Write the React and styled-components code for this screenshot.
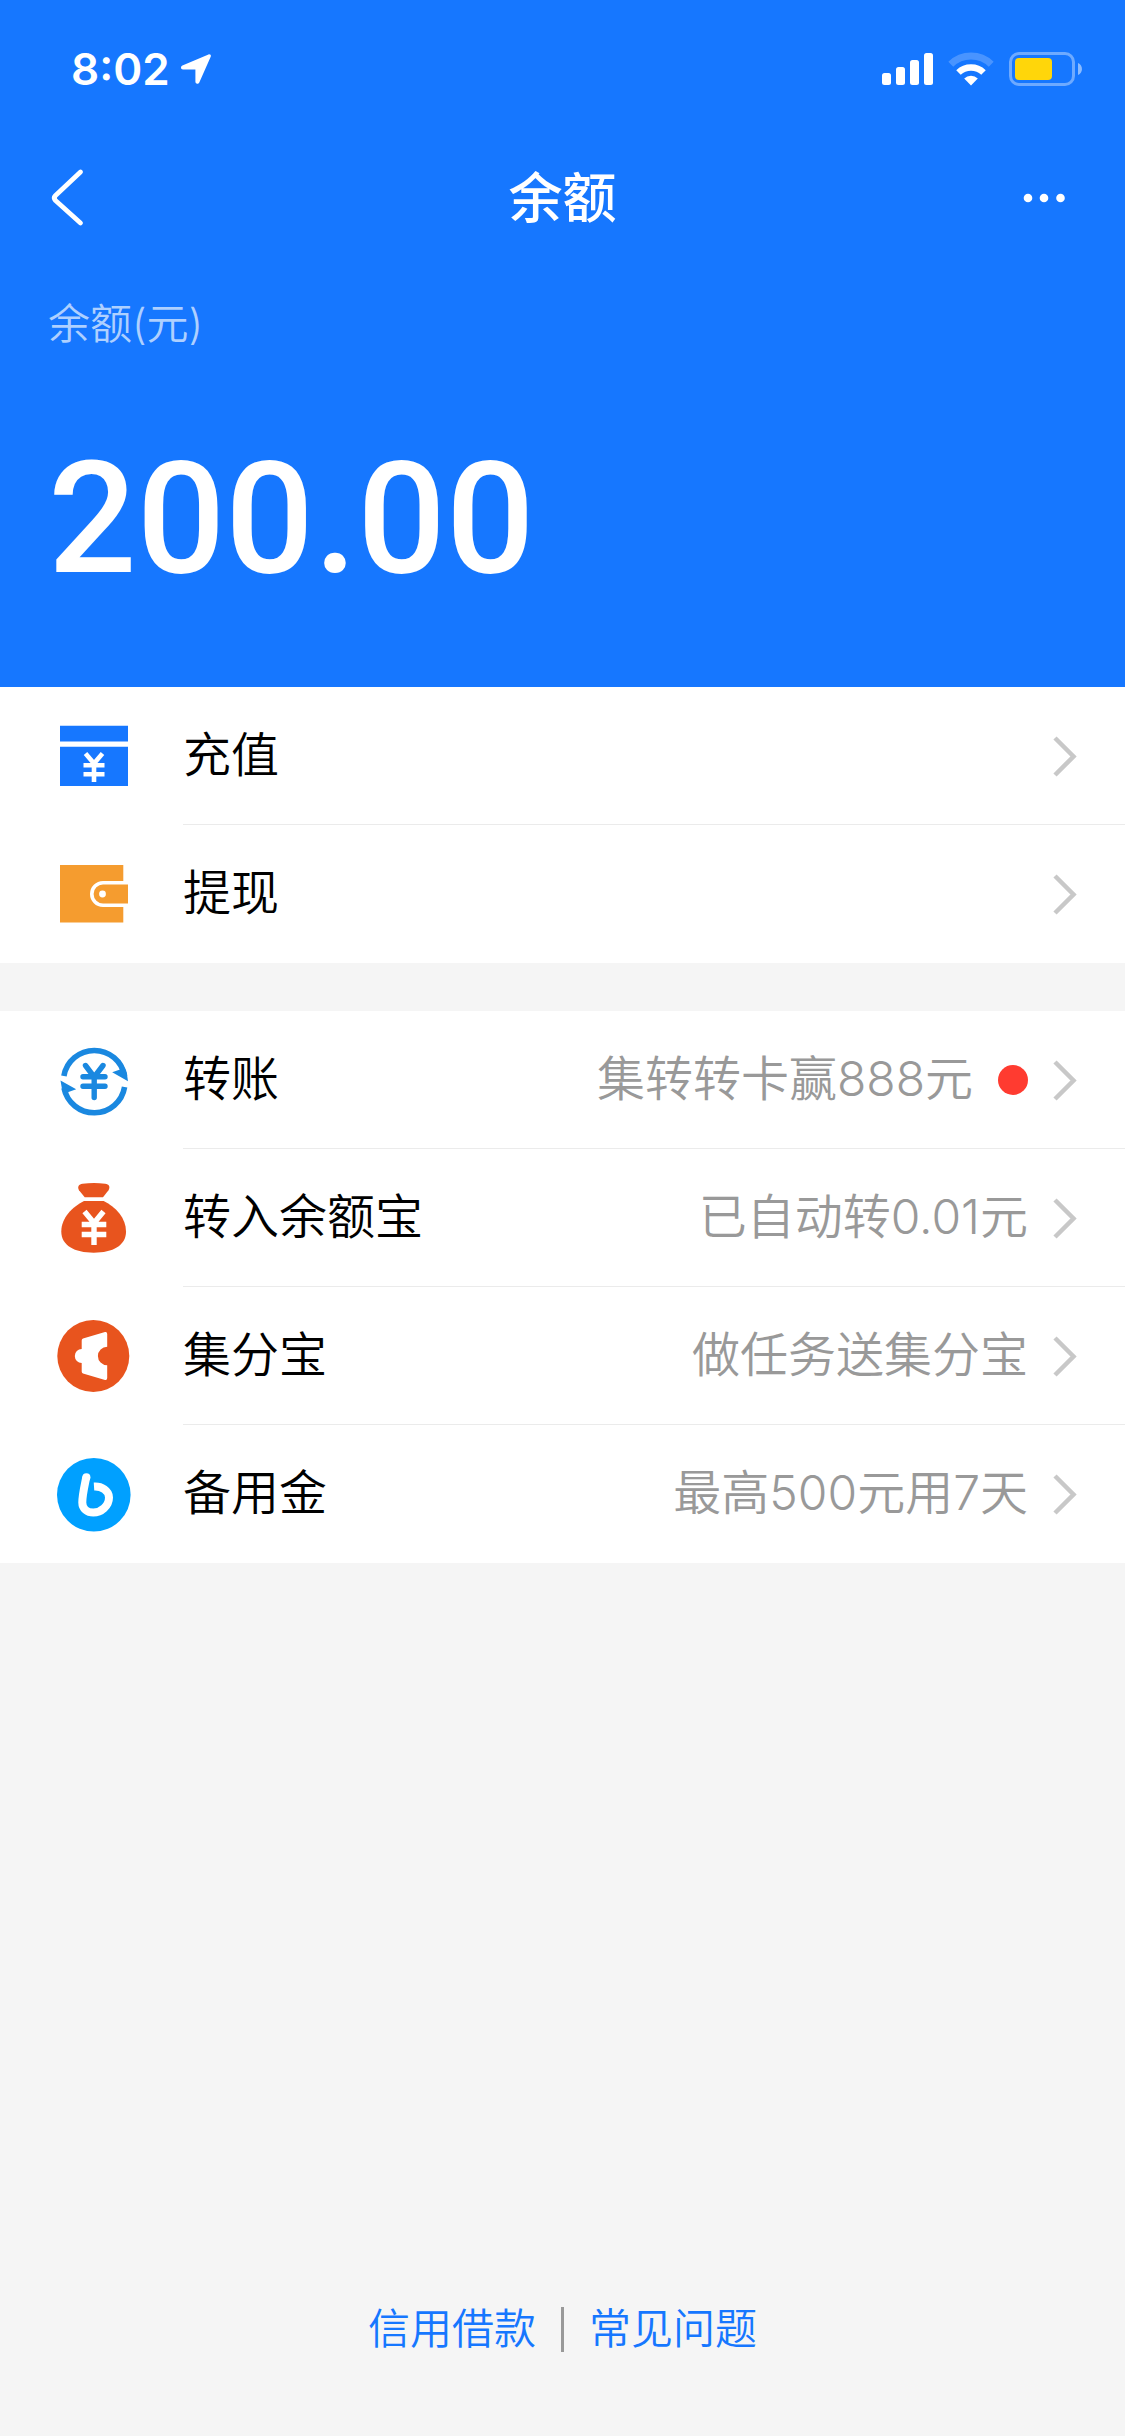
import React from 'react';
import styled, { createGlobalStyle } from 'styled-components';

const GlobalStyle = createGlobalStyle`
  * { box-sizing: border-box; }
  body {
    margin: 0;
    background: #f5f5f5;
    font-family: Inter, "Noto Sans CJK SC", sans-serif;
    font-weight: 350;
  }
  svg { display: block; flex: none; overflow: visible; }
`;

const Page = styled.div`
  display: flex;
  flex-direction: column;
  min-height: 100vh;
`;

const Header = styled.header`
  background: #1677ff;
  color: #fff;
  padding-bottom: 64px;
`;

const StatusBar = styled.div`
  display: flex;
  align-items: center;
  justify-content: space-between;
  height: 138px;
  padding: 0 43px 0 71px;
`;

const StatusGroup = styled.div`
  display: flex;
  align-items: center;
  gap: ${(p) => p.$gap}px;
`;

const Time = styled.span`
  font-size: 44px;
  line-height: 60px;
  font-weight: 600;
`;

const NavBar = styled.div`
  display: grid;
  grid-template-columns: 1fr auto 1fr;
  align-items: center;
  height: 120px;
  padding: 0 48px;
`;

const IconButton = styled.button`
  display: flex;
  align-items: center;
  justify-self: ${(p) => p.$side};
  height: 72px;
  padding: 0;
  border: 0;
  background: none;
  color: inherit;
`;

const Title = styled.h1`
  margin: 0;
  padding-top: 2px;
  font-size: 54px;
  line-height: 72px;
  font-weight: 500;
`;

const Balance = styled.section`
  padding: 36px 48px 0;
`;

const BalanceLabel = styled.p`
  margin: 0;
  font-size: 42px;
  line-height: 60px;
  color: rgba(255, 255, 255, 0.66);
`;

const Amount = styled.p`
  margin: 60px 0 0;
  font-family: Roboto, sans-serif;
  font-size: 156px;
  line-height: 209px;
  font-weight: 500;
`;

const List = styled.ul`
  margin: 0 0 48px;
  padding: 0;
  list-style: none;
  background: #fff;
`;

const Row = styled.a`
  display: flex;
  align-items: center;
  gap: 53px;
  height: 138px;
  padding-left: 58px;
  color: #000;
  text-decoration: none;
`;

const RowBody = styled.span`
  display: flex;
  flex: 1;
  align-items: center;
  gap: 25px;
  height: 100%;
  padding-right: 48px;
  border-bottom: 1px solid #ebebeb;

  li:last-child & { border-bottom-color: transparent; }
`;

const RowText = styled.span`
  font-size: 48px;
  line-height: 66px;
  padding-bottom: 2px;
`;

const RowLabel = styled(RowText)`
  flex: 1;
`;

const RowValue = styled(RowText)`
  color: #999;
`;

const Dot = styled.span`
  width: 30px;
  height: 30px;
  border-radius: 50%;
  background: #ff3b30;
`;

const Footer = styled.footer`
  display: flex;
  align-items: center;
  justify-content: center;
  gap: 25px;
  margin-top: auto;
  padding-bottom: 77px;
`;

const FooterLink = styled.a`
  font-size: 42px;
  line-height: 60px;
  color: #1677ff;
  text-decoration: none;
`;

const Separator = styled.span`
  width: 3px;
  height: 45px;
  background: #999;
`;

const LocationArrow = () => (
  <svg width="30" height="30" viewBox="0 0 30 30" fill="#fff">
    <path d="M27.5.4 1.4 11.6C-.7 12.6-.3 15.600 2 15.600h12.400v12.200c0 2.300 3 2.700 3.900.7L29.800 2.500C30.300 1 29 0 27.500.4z" />
  </svg>
);

const Signal = () => (
  <svg width="51" height="34" viewBox="0 0 51 34" fill="#fff">
    <rect x="0" y="21" width="9" height="12" rx="2.500" />
    <rect x="14" y="15" width="9" height="18" rx="2.500" />
    <rect x="28" y="8" width="9" height="25" rx="2.500" />
    <rect x="42" y="1" width="9" height="32" rx="2.500" />
  </svg>
);

const Wifi = () => (
  <svg width="46" height="34" viewBox="0 0 46 34" fill="none">
    <path d="M2.800 12.200A29 29 0 0 1 43.200 12.200" stroke="#fff" strokeOpacity=".22" strokeWidth="7" />
    <path d="M10.500 20.500A18 18 0 0 1 35.500 20.500" stroke="#fff" strokeWidth="6.500" />
    <path d="M23 33.500 16.200 26.600a9.600 9.600 0 0 1 13.600 0z" fill="#fff" />
  </svg>
);

const Battery = () => (
  <svg width="73" height="34" viewBox="0 0 73 34">
    <rect x="1.500" y="1.500" width="63" height="31" rx="8.500" fill="none" stroke="#fff" strokeOpacity=".38" strokeWidth="3" />
    <rect x="6" y="6" width="37" height="22" rx="4" fill="#ffd60a" />
    <path d="M69 11c5.300 2 5.300 10 0 12z" fill="#fff" fillOpacity=".5" />
  </svg>
);

const BackIcon = () => (
  <svg width="38" height="58" viewBox="0 0 38 58" fill="none" stroke="#fff" strokeWidth="4.800" strokeLinecap="round" strokeLinejoin="round">
    <path d="M32.500 3 7.500 26.500Q5.100 29 7.500 31.500L32.500 54" />
  </svg>
);

const MoreIcon = () => (
  <svg width="54" height="12" viewBox="0 0 54 12" fill="#fff">
    <circle cx="5" cy="6" r="4.300" />
    <circle cx="21" cy="6" r="4.300" />
    <circle cx="37.500" cy="6" r="4.300" />
  </svg>
);

const Chevron = () => (
  <svg width="24" height="40" viewBox="0 0 24 40" fill="none" stroke="#c8c8c8" strokeWidth="4.500">
    <path d="M2 2 20.500 20.500 2 39" />
  </svg>
);

const RechargeIcon = () => (
  <svg width="72" height="72" viewBox="0 0 72 72">
    <path d="M2 5.700h68v15.800H2zM2 26.700h68v39.300H2z" fill="#1677ff" />
    <path d="M27.500 33.500 36 43.500 44.500 33.500M25.500 45.300h21M25.500 54.200h21M36 43.500V62" fill="none" stroke="#fff" strokeWidth="4.600" />
  </svg>
);

const WalletIcon = () => (
  <svg width="72" height="72" viewBox="0 0 72 72">
    <path d="M2 7h63.300v16H45a13 13 0 0 0 0 26h20.300v15.500H2z" fill="#f59c2f" />
    <path d="M45 26.600h25v18.800H45a9.400 9.400 0 0 1 0-18.800z" fill="#f59c2f" />
    <circle cx="44.500" cy="36" r="3.400" fill="#fff" />
  </svg>
);

const TransferIcon = () => (
  <svg width="72" height="72" viewBox="0 0 72 72">
    <g fill="none" stroke="#1a88e0" strokeWidth="5.600">
      <path d="M5.900 32A30.800 30.800 0 0 1 66.600 32" />
      <path d="M66.600 43A30.800 30.800 0 0 1 6 44" />
    </g>
    <path d="M70 37.200 54.200 28.200 62 25.500 65 21 68.800 29zM2.500 36.600 18.200 45.300 10.500 48 8 52 3.800 44z" fill="#1a88e0" />
    <path d="M27.500 21.500 36.200 33 45 21.500M25 32.800h22M25 42.200h22M36.200 33V53.500" fill="none" stroke="#1a88e0" strokeWidth="5.400" strokeLinecap="round" strokeLinejoin="round" />
  </svg>
);

const MoneyBagIcon = () => (
  <svg width="72" height="72" viewBox="0 0 72 72">
    <path d="M26.700 15.300 21 8.200C19 4.500 21 2.200 24.500 1.700Q36 .3 47.200 1.700C51 2.200 52.500 4.500 50.500 8.200L45 15.300z" fill="#e8541e" />
    <path d="M26 19h19.700C58 25 68 36 68 49.500 68 63.500 55 70.700 35.700 70.700S3.300 63.500 3.300 49.500C3.300 36 14 25 26 19z" fill="#e8541e" />
    <path d="M26.500 29.500 36 41 45.500 29.500M23.700 42.500h24.600M23.700 52.500h24.600M36 41V63" fill="none" stroke="#fff" strokeWidth="5.400" />
  </svg>
);

const PointsIcon = () => (
  <svg width="72" height="72" viewBox="0 0 72 72">
    <circle cx="35.300" cy="36" r="36" fill="#e8541e" />
    <path d="M25 18.500 47 12.100Q49.200 11.700 49.200 14V26.700a9.300 9.300 0 0 0 0 18.600V58Q49.200 60.300 47 59.900L25 53.500Q23.700 53 23.700 51.500V42.900a6.900 6.900 0 0 1 0-13.800V20.500Q23.700 19 25 18.500z" fill="#fff" />
  </svg>
);

const ReserveIcon = () => (
  <svg width="72" height="72" viewBox="0 0 72 72">
    <circle cx="35.800" cy="36.800" r="36.800" fill="#00a0ff" />
    <path d="M28.300 19C26.500 28 24.300 37 24.300 44.500 24.300 51 29.500 54.600 35.300 54.600 43 54.600 51 48 51 39.500 51 32.500 43.500 28 36 28.500" fill="none" stroke="#fff" strokeWidth="8" />
    <circle cx="28.400" cy="19.200" r="4" fill="#fff" />
  </svg>
);

const groups = [
  [
    { label: '充值', Icon: RechargeIcon },
    { label: '提现', Icon: WalletIcon },
  ],
  [
    { label: '转账', Icon: TransferIcon, value: '集转转卡赢888元', dot: true },
    { label: '转入余额宝', Icon: MoneyBagIcon, value: '已自动转0.01元' },
    { label: '集分宝', Icon: PointsIcon, value: '做任务送集分宝' },
    { label: '备用金', Icon: ReserveIcon, value: '最高500元用7天' },
  ],
];

export default function App() {
  return (
    <Page>
      <GlobalStyle />
      <Header>
        <StatusBar>
          <StatusGroup $gap={11}>
            <Time>8:02</Time>
            <LocationArrow />
          </StatusGroup>
          <StatusGroup $gap={15}>
            <Signal />
            <Wifi />
            <Battery />
          </StatusGroup>
        </StatusBar>
        <NavBar>
          <IconButton $side="start" aria-label="返回"><BackIcon /></IconButton>
          <Title>余额</Title>
          <IconButton $side="end" aria-label="更多"><MoreIcon /></IconButton>
        </NavBar>
        <Balance>
          <BalanceLabel>余额(元)</BalanceLabel>
          <Amount>200.00</Amount>
        </Balance>
      </Header>
      <main>
        {groups.map((rows) => (
          <List key={rows[0].label}>
            {rows.map(({ label, Icon, value, dot }) => (
              <li key={label}>
                <Row href="#">
                  <Icon />
                  <RowBody>
                    <RowLabel>{label}</RowLabel>
                    {value && <RowValue>{value}</RowValue>}
                    {dot && <Dot />}
                    <Chevron />
                  </RowBody>
                </Row>
              </li>
            ))}
          </List>
        ))}
      </main>
      <Footer>
        <FooterLink href="#">信用借款</FooterLink>
        <Separator />
        <FooterLink href="#">常见问题</FooterLink>
      </Footer>
    </Page>
  );
}
